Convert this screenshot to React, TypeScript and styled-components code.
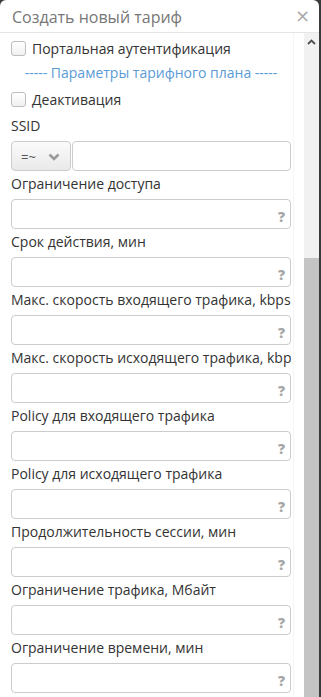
import React from 'react';
import styled, { createGlobalStyle } from 'styled-components';

const GlobalStyle = createGlobalStyle`
  html, body {
    margin: 0;
    padding: 0;
    background: #3b3b3b;
    overflow: hidden;
  }
  * {
    box-sizing: border-box;
  }
`;

const Modal = styled.div`
  width: 319px;
  height: 697px;
  background: #fff;
  border-radius: 6px 6px 0 0;
  display: flex;
  flex-direction: column;
  overflow: hidden;
  font-family: 'Open Sans', 'Noto Sans', sans-serif;
`;

const Header = styled.div`
  height: 33px;
  flex: none;
  display: flex;
  align-items: center;
  justify-content: space-between;
  padding: 0 9px 0 12px;
  border-bottom: 1px solid #e5e5e5;
`;

const Title = styled.div`
  font-size: 16px;
  color: #777;
  line-height: 20px;
  margin-top: 2px;
`;

const Close = styled.span`
  font-size: 18px;
  color: #aaa;
  line-height: 20px;
  font-family: 'DejaVu Sans', sans-serif;
`;

const Body = styled.div`
  flex: 1;
  min-height: 0;
  display: flex;
`;

const Content = styled.div`
  width: 294px;
  flex: none;
  padding-left: 11px;
  border-right: 1px solid #f5f5f5;
  overflow: hidden;
`;

const Gap = styled.div`
  width: 10px;
  flex: none;
`;

const ScrollBar = styled.div`
  width: 15px;
  flex: none;
  background: #f1f1f1;
  display: flex;
  flex-direction: column;
`;

const ScrollArrow = styled.div`
  height: 17px;
  display: flex;
  align-items: center;
  justify-content: center;
`;

const ScrollTrack = styled.div`
  flex: 1;
  padding-top: 208px;
  display: flex;
  flex-direction: column;
`;

const Thumb = styled.div`
  flex: 1;
  background: #c4c4c4;
`;

const CheckRow = styled.label<{ $h: number }>`
  height: ${(p) => p.$h}px;
  display: flex;
  align-items: center;
  gap: 6px;
  font-size: 14px;
  color: #333;
`;

const Box = styled.span`
  width: 15px;
  height: 15px;
  border: 1px solid #bdbdbd;
  border-radius: 3px;
  background: linear-gradient(#fff, #f0f0f0);
`;

const Divider = styled.div`
  height: 22px;
  line-height: 20px;
  font-size: 14px;
  color: #5b9bd5;
  width: 280px;
  text-align: center;
  white-space: nowrap;
`;

const Label = styled.div`
  width: 280px;
  padding: 3px 0 5px;
  line-height: 20px;
  font-size: 14px;
  color: #333;
  white-space: nowrap;
  overflow: hidden;
`;

const InputBox = styled.div`
  width: 280px;
  height: 30px;
  border: 1px solid #ccc;
  border-radius: 4px;
  display: flex;
  align-items: center;
  padding: 5px 5px 0 0;
`;

const Field = styled.input`
  flex: 1;
  min-width: 0;
  border: none;
  outline: none;
  background: transparent;
  height: 100%;
`;

const Help = styled.span`
  font-size: 14px;
  font-weight: 800;
  color: #a6a6a6;
  line-height: 16px;
`;

const SelectRow = styled.div`
  width: 280px;
  height: 30px;
  display: flex;
  gap: 1px;
`;

const Select = styled.div`
  width: 60px;
  flex: none;
  border: 1px solid #ccc;
  border-radius: 4px;
  background: linear-gradient(#fbfbfb, #e9e9e9);
  display: flex;
  align-items: center;
  justify-content: space-between;
  padding: 2px 10px 0 9px;
  font-size: 13px;
  color: #555;
`;

const PlainInput = styled.div`
  flex: 1;
  border: 1px solid #ccc;
  border-radius: 4px;
`;

const Chevron = () => (
  <svg width="12" height="8" viewBox="0 0 12 8">
    <polyline points="1.5,1.5 6,6 10.5,1.5" fill="none" stroke="#9a9a9a" strokeWidth="2.6" />
  </svg>
);

const fields = [
  'Ограничение доступа',
  'Срок действия, мин',
  'Макс. скорость входящего трафика, kbps',
  'Макс. скорость исходящего трафика, kbps',
  'Policy для входящего трафика',
  'Policy для исходящего трафика',
  'Продолжительность сессии, мин',
  'Ограничение трафика, Мбайт',
  'Ограничение времени, мин',
];

export default function App() {
  return (
    <>
      <GlobalStyle />
      <Modal>
        <Header>
          <Title>Создать новый тариф</Title>
          <Close>×</Close>
        </Header>
        <Body>
          <Content>
            <CheckRow $h={30}>
              <Box />
              Портальная аутентификация
            </CheckRow>
            <Divider>----- Параметры тарифного плана -----</Divider>
            <CheckRow $h={28}>
              <Box />
              Деактивация
            </CheckRow>
            <Label>SSID</Label>
            <SelectRow>
              <Select>
                <span>=~</span>
                <Chevron />
              </Select>
              <PlainInput />
            </SelectRow>
            {fields.map((f) => (
              <div key={f}>
                <Label>{f}</Label>
                <InputBox>
                  <Field />
                  <Help>?</Help>
                </InputBox>
              </div>
            ))}
          </Content>
          <Gap />
          <ScrollBar>
            <ScrollArrow>
              <svg width="9" height="6" viewBox="0 0 9 6">
                <polyline points="1,5 4.5,1.5 8,5" fill="none" stroke="#505050" strokeWidth="1.8" />
              </svg>
            </ScrollArrow>
            <ScrollTrack>
              <Thumb />
            </ScrollTrack>
          </ScrollBar>
        </Body>
      </Modal>
    </>
  );
}
